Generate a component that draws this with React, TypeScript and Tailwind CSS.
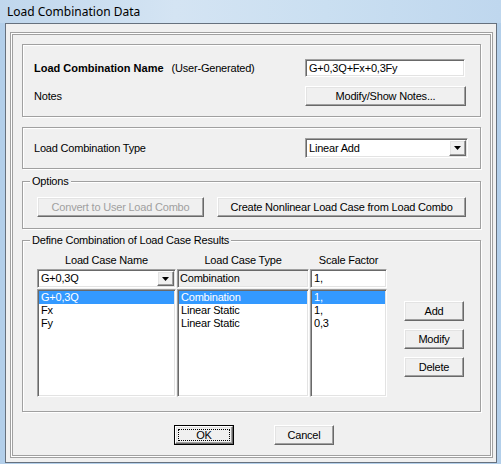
import React from 'react';

// classic win32 bevels
const sunken =
  'border border-t-[#a0a0a0] border-l-[#a0a0a0] border-r-white border-b-white shadow-[inset_1px_1px_0_#696969,inset_-1px_-1px_0_#e3e3e3]';
const raised =
  'border border-t-white border-l-white border-r-[#696969] border-b-[#696969] shadow-[inset_-1px_-1px_0_#a0a0a0,inset_1px_1px_0_#e3e3e3] bg-[#f0f0f0]';
const etched = 'border border-[#a0a0a0] shadow-[inset_1px_1px_0_#fff,1px_1px_0_#fff]';

const Arrow: React.FC = () => (
  <div className={`${raised} w-[17px] h-full flex items-center justify-center shrink-0`}>
    <svg width="7" height="4" viewBox="0 0 7 4">
      <path d="M0 0h7L3.5 4z" fill="#000" />
    </svg>
  </div>
);

const Btn: React.FC<{ className: string; disabled?: boolean; children: React.ReactNode }> = ({
  className,
  disabled,
  children,
}) => (
  <div
    className={`${raised} ${className} h-[20px] flex items-center justify-center ${
      disabled ? 'text-[#a0a0a0]' : 'text-black'
    }`}
  >
    {children}
  </div>
);

const ListBox: React.FC<{ className: string; items: string[] }> = ({ className, items }) => (
  <div className={`${sunken} ${className} h-[108px] bg-white p-px`}>
    {items.map((t, i) => (
      <div
        key={t + i}
        className={`h-[13px] leading-[13px] pl-[2px] ${i === 0 ? 'bg-[#3399ff] text-white' : ''}`}
      >
        {t}
      </div>
    ))}
  </div>
);

export default function App() {
  return (
    <div className="w-[501px] h-[464px] overflow-hidden bg-[#b3cfea] font-['Liberation_Sans',Arial,sans-serif] text-[11px] tracking-[-0.2px] text-black">
      {/* title bar */}
      <div className="h-[23px] pl-[7px] flex items-center bg-[linear-gradient(90deg,#c0d7ed,#d4e4f3_35%,#cadff1_65%,#bfd7ee)] font-['Noto_Sans',sans-serif] text-[12px] tracking-normal">
        Load Combination Data
      </div>

      {/* client */}
      <div className="ml-[5px] w-[492px] h-[440px] border border-[#66717e] bg-[#f0f0f0] pl-[4px] pt-[8px]">
        <div className="w-[483px] h-[426px] border border-[#a0a0a0] bg-white p-px">
          <div className="h-full border border-[#a0a0a0] bg-[#f0f0f0] pl-[9px] pt-[9px] flex flex-col">
            {/* name panel */}
            <div className={`${etched} w-[459px] h-[73px] pl-[11px] pt-[14px]`}>
              <div className="flex items-center h-[18px]">
                <div className="w-[271px] flex">
                  <span className="font-bold tracking-normal">Load Combination Name</span>
                  <span className="ml-[8px]">(User-Generated)</span>
                </div>
                <div className={`${sunken} w-[160px] h-[18px] bg-white pl-[3px] flex items-center`}>
                  G+0,3Q+Fx+0,3Fy
                </div>
              </div>
              <div className="flex items-center h-[20px] mt-[9px]">
                <div className="w-[271px]">Notes</div>
                <Btn className="w-[161px]">Modify/Show Notes...</Btn>
              </div>
            </div>

            {/* type panel */}
            <div className={`${etched} w-[459px] h-[42px] mt-[10px] pl-[11px] flex items-center`}>
              <div className="w-[271px]">Load Combination Type</div>
              <div className={`${sunken} w-[163px] h-[20px] bg-white p-px flex items-center`}>
                <div className="flex-1 pl-[2px]">Linear Add</div>
                <Arrow />
              </div>
            </div>

            {/* options */}
            <fieldset className={`${etched} w-[459px] mt-[5px] pb-[11px]`}>
              <legend className="ml-[7px] px-[2px] leading-[14px] bg-[#f0f0f0]">Options</legend>
              <div className="flex mt-[9px] pl-[14px]">
                <Btn className="w-[167px]" disabled>
                  Convert to User Load Combo
                </Btn>
                <Btn className="w-[249px] ml-[13px]">Create Nonlinear Load Case from Load Combo</Btn>
              </div>
            </fieldset>

            {/* combination */}
            <fieldset className={`${etched} w-[459px] mt-[4px] pb-[14px]`}>
              <legend className="ml-[7px] px-[2px] leading-[14px] bg-[#f0f0f0]">
                Define Combination of Load Case Results
              </legend>
              <div className="pl-[14px]">
                <div className="flex mt-[6px] h-[14px] leading-[14px] text-center">
                  <div className="w-[139px]">Load Case Name</div>
                  <div className="w-[132px] ml-[1px]">Load Case Type</div>
                  <div className="w-[77px] ml-[1px]">Scale Factor</div>
                </div>
                <div className="flex mt-[2px] h-[19px]">
                  <div className={`${sunken} w-[139px] h-full bg-white p-px flex items-center`}>
                    <div className="flex-1 pl-[2px]">G+0,3Q</div>
                    <Arrow />
                  </div>
                  <div className={`${sunken} w-[132px] ml-[1px] h-full bg-[#f0f0f0] pl-[2px] flex items-center`}>
                    Combination
                  </div>
                  <div className={`${sunken} w-[77px] ml-[1px] h-full bg-white pl-[3px] flex items-center`}>
                    1,
                  </div>
                </div>
                <div className="flex mt-[1px]">
                  <ListBox className="w-[139px]" items={['G+0,3Q', 'Fx', 'Fy']} />
                  <ListBox className="w-[132px] ml-[1px]" items={['Combination', 'Linear Static', 'Linear Static']} />
                  <ListBox className="w-[77px] ml-[1px]" items={['1,', '1,', '0,3']} />
                  <div className="ml-[17px] pt-[12px] flex flex-col gap-[8px]">
                    <Btn className="w-[60px]">Add</Btn>
                    <Btn className="w-[60px]">Modify</Btn>
                    <Btn className="w-[60px]">Delete</Btn>
                  </div>
                </div>
              </div>
            </fieldset>

            {/* ok / cancel */}
            <div className="flex mt-[13px] ml-[152px]">
              <div className="w-[60px] h-[20px] border border-black">
                <div className={`${raised} h-full flex items-center justify-center`}>
                  <div className="w-[52px] h-[12px] border border-dotted border-black flex items-center justify-center">
                    OK
                  </div>
                </div>
              </div>
              <Btn className="w-[60px] ml-[40px]">Cancel</Btn>
            </div>
          </div>
        </div>
      </div>
    </div>
  );
}
